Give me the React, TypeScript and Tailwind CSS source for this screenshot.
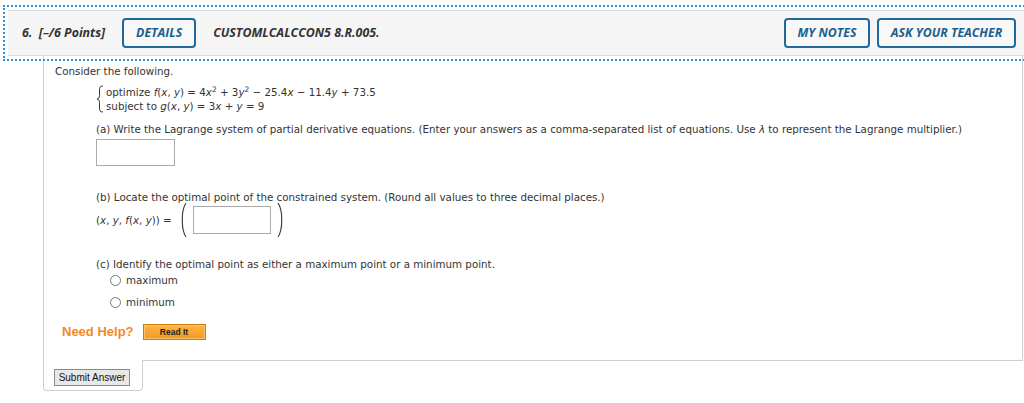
export default function App() {
  return (
    <div className="w-[1024px] h-[403px] overflow-hidden bg-white pt-[10px] text-[#333]">
      <Header />
      <Panel />
    </div>
  );
}

const headerFont = { fontFamily: '"Open Sans", "Liberation Sans", sans-serif' };

function Header() {
  const btn =
    "h-[30px] flex items-center justify-center rounded-[4px] border-2 border-[#1f6a9a] bg-[#f8f8f8] text-[#1b5f8d] text-[12.3px] font-bold italic";
  return (
    <div
      style={headerFont}
      className="ml-[8px] h-[46px] flex items-center bg-[#f5f5f5] border-y border-[#dcdcdc] outline-2 outline-dotted outline-[#2f8fe0] outline-offset-[3px] pl-[14px] pr-[8px]"
    >
      <span className="text-[12.4px] font-bold italic text-[#333]">6.&nbsp; [–/6 Points]</span>
      <div className={btn + " ml-[17px] w-[74px]"}>DETAILS</div>
      <span className="ml-[17px] text-[12.4px] font-bold italic text-[#333]">CUSTOMLCALCCON5 8.R.005.</span>
      <div className="ml-auto flex gap-[7px]">
        <div className={btn + " w-[86px]"}>MY NOTES</div>
        <div className={btn + " w-[139px]"}>ASK YOUR TEACHER</div>
      </div>
    </div>
  );
}

const bodyFont = { fontFamily: '"DejaVu Sans", Verdana, sans-serif' };

function Brace() {
  return (
    <svg width="8" height="28" viewBox="0 0 8 28" className="shrink-0">
      <path
        d="M7 1 C4 1 3.5 2.5 3.5 5 L3.5 10.5 C3.5 12.8 2.5 13.6 1 14 C2.5 14.4 3.5 15.2 3.5 17.5 L3.5 23 C3.5 25.5 4 27 7 27"
        fill="none"
        stroke="#333"
        strokeWidth="1"
      />
    </svg>
  );
}

function Paren({ flip }: { flip?: boolean }) {
  return (
    <svg width="8" height="36" viewBox="0 0 8 36" className={flip ? "-scale-x-100" : ""}>
      <path d="M7 1 C2 8 2 28 7 35" fill="none" stroke="#333" strokeWidth="1.1" />
    </svg>
  );
}

function Radio({ label }: { label: string }) {
  return (
    <div className="flex items-center h-[14px] ml-[55px]">
      <span className="w-[11px] h-[11px] rounded-full border border-[#777] bg-white" />
      <span className="ml-[5px]">{label}</span>
    </div>
  );
}

function Panel() {
  return (
    <div style={bodyFont} className="ml-[43px] w-[980px] text-[10.3px] leading-[14px] text-[#333]">
      <div className="h-[304px] border-x border-[#cfcfcf] rounded-br-[3px] pl-[11px] pt-[8px]">
        <div>Consider the following.</div>
        <div className="mt-[7px] ml-[41px] flex items-center">
          <Brace />
          <div className="ml-[2px]">
            <div>
              optimize <i>f</i>(<i>x</i>, <i>y</i>) = 4<i>x</i>
              <sup className="text-[7.5px]">2</sup> + 3<i>y</i>
              <sup className="text-[7.5px]">2</sup> − 25.4<i>x</i> − 11.4<i>y</i> + 73.5
            </div>
            <div>
              subject to <i>g</i>(<i>x</i>, <i>y</i>) = 3<i>x</i> + <i>y</i> = 9
            </div>
          </div>
        </div>
        <div className="mt-[9px] ml-[41px]">
          (a) Write the Lagrange system of partial derivative equations. (Enter your answers as a
          comma-separated list of equations. Use <i>λ</i> to represent the Lagrange multiplier.)
        </div>
        <div className="mt-[3px] ml-[41px] w-[79px] h-[27px] border border-[#aaa] bg-white" />
        <div className="mt-[24px] ml-[41px]">
          (b) Locate the optimal point of the constrained system. (Round all values to three decimal
          places.)
        </div>
        <div className="ml-[41px] h-[32px] flex items-center">
          <span>
            (<i>x</i>, <i>y</i>, <i>f</i>(<i>x</i>, <i>y</i>)) =
          </span>
          <span className="ml-[7px]">
            <Paren />
          </span>
          <div className="ml-[6px] w-[78px] h-[28px] border border-[#aaa] bg-white" />
          <span className="ml-[6px]">
            <Paren flip />
          </span>
        </div>
        <div className="mt-[21px] ml-[41px]">
          (c) Identify the optimal point as either a maximum point or a minimum point.
        </div>
        <div className="mt-[2px]">
          <Radio label="maximum" />
        </div>
        <div className="mt-[8px]">
          <Radio label="minimum" />
        </div>
        <div className="mt-[15px] ml-[7px] flex items-center h-[16px]">
          <span
            style={{ fontFamily: '"Liberation Sans", Arial, sans-serif' }}
            className="text-[13px] font-bold text-[#f28a1d]"
          >
            Need Help?
          </span>
          <span
            style={{ fontFamily: '"Liberation Sans", Arial, sans-serif' }}
            className="ml-[9px] w-[63px] h-[16px] flex items-center justify-center bg-gradient-to-b from-[#fbb545] to-[#f39a1c] border border-[#d07a10] text-[8.5px] font-bold text-[#222] shadow-[inset_0_0_0_1px_#fcc46a]"
          >
            Read It
          </span>
        </div>
      </div>
      <div className="flex h-[31px]">
        <div className="w-[100px] border-x border-b border-[#cfcfcf] rounded-b-[4px] pl-[10px] pt-[9px]">
          <span
            style={{ fontFamily: '"Liberation Sans", Arial, sans-serif' }}
            className="inline-flex items-center justify-center w-[76px] h-[17px] bg-[#e8e8e8] border border-[#8a8a8a] text-[10px] text-[#111]"
          >
            Submit Answer
          </span>
        </div>
        <div className="flex-1 border-t border-[#cfcfcf]" />
      </div>
    </div>
  );
}
